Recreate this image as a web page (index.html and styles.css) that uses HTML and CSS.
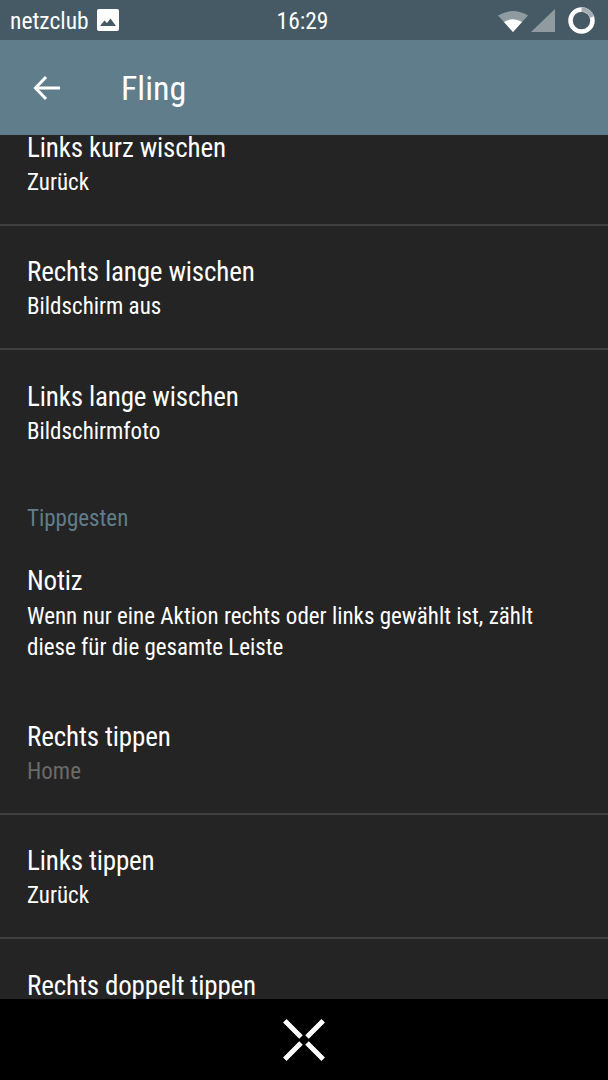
FILE: index.html
```html
<!DOCTYPE html>
<html lang="de">
<head>
    <meta charset="UTF-8">
    <meta name="viewport" content="width=device-width, initial-scale=1.0">
    <title>Fling</title>
    <link rel="stylesheet" href="styles.css">
</head>
<body>
    <div class="status-bar">
        <div class="status-left">
            <span class="status-text">netzclub</span>
            <svg class="picture-icon" width="22" height="22" viewBox="0 0 22 22">
                <rect x="0" y="0" width="22" height="22" rx="2" fill="#fff"/>
                <path d="M3 17 L7.500 11.500 L10 14 L13.500 9.500 L19 17 Z" fill="#455a64"/>
            </svg>
        </div>
        <div class="status-text">16:29</div>
        <div class="status-right">
            <svg width="30" height="23" viewBox="0 0 30 23">
                <path d="M0 6.500 Q15 -2.500 30 6.500 L15 23 Z" fill="#8f9ba1"/>
                <path d="M6 13 Q15 7.500 24 13 L15 23 Z" fill="#fff"/>
            </svg>
            <svg width="24" height="23" viewBox="0 0 24 23">
                <path d="M0 23 L24 0 L24 23 Z" fill="#8f9ba1"/>
            </svg>
            <svg class="battery" width="27" height="27" viewBox="0 0 27 27">
                <circle cx="13.500" cy="13.500" r="11" fill="none" stroke="#fff" stroke-width="4.500"/>
                <path d="M13.500 2.500 A11 11 0 0 1 24 10" fill="none" stroke="#a3adb2" stroke-width="4.500"/>
            </svg>
        </div>
    </div>

    <header class="app-bar">
        <svg class="back-icon" width="28" height="26" viewBox="0 0 28 26">
            <path d="M27 13 H3 M13 2 L2.500 13 L13 24" fill="none" stroke="#fff" stroke-width="3"/>
        </svg>
        <h1>Fling</h1>
    </header>

    <main class="list">
        <div class="row row-first">
            <div class="row-title">Links kurz wischen</div>
            <div class="row-sub">Zurück</div>
        </div>
        <div class="row">
            <div class="row-title">Rechts lange wischen</div>
            <div class="row-sub">Bildschirm aus</div>
        </div>
        <div class="row row-plain row-last-swipe">
            <div class="row-title">Links lange wischen</div>
            <div class="row-sub">Bildschirmfoto</div>
        </div>
        <div class="section-title">Tippgesten</div>
        <div class="row row-plain row-note">
            <div class="row-title">Notiz</div>
            <div class="row-sub">Wenn nur eine Aktion rechts oder links gewählt ist, zählt diese für die gesamte Leiste</div>
        </div>
        <div class="row">
            <div class="row-title">Rechts tippen</div>
            <div class="row-sub row-disabled">Home</div>
        </div>
        <div class="row">
            <div class="row-title">Links tippen</div>
            <div class="row-sub">Zurück</div>
        </div>
        <div class="row row-plain">
            <div class="row-title">Rechts doppelt tippen</div>
        </div>
    </main>

    <footer class="nav-bar">
        <svg width="44" height="44" viewBox="0 0 44 44">
            <path d="M2.800 2.800 L19 19 M41.200 2.800 L25 19 M2.800 41.200 L19 25 M41.200 41.200 L25 25" fill="none" stroke="#fff" stroke-width="5"/>
        </svg>
    </footer>
</body>
</html>
```

FILE: styles.css
```css
html, body {
    height: 100%;
}
body {
    font-family: Roboto, "Liberation Sans", sans-serif;
    font-stretch: 75%;
    background-color: #000;
    color: #fff;
    margin: 0;
    display: flex;
    flex-direction: column;
    height: 1080px;
    overflow: hidden;
}
.status-bar {
    height: 40px;
    flex: none;
    background-color: #455a64;
    display: grid;
    grid-template-columns: 1fr auto 1fr;
    align-items: center;
    padding: 0 13px 0 10px;
    font-size: 23.500px;
}
.status-left {
    display: flex;
    align-items: center;
    gap: 8px;
}
.status-text {
    padding-top: 2px;
}
.status-right {
    display: flex;
    justify-content: flex-end;
    align-items: center;
    gap: 3px;
}
.battery {
    margin-left: 10px;
}
.app-bar {
    height: 95px;
    flex: none;
    background-color: #607d8b;
    display: flex;
    align-items: center;
    padding-left: 33px;
    box-sizing: border-box;
}
.app-bar h1 {
    margin: 0 0 0 60px;
    font-size: 34px;
    font-weight: 400;
}
.list {
    flex: 1;
    min-height: 0;
    overflow: hidden;
    background-color: #242424;
}
.row {
    padding: 31px 27px 0;
    height: 124px;
    box-sizing: border-box;
    border-bottom: 2px solid #3f3f3f;
}
.row-first {
    height: 91px;
    padding-top: 0;
}
.row-first .row-title {
    line-height: 26px;
}
.row-first .row-sub {
    margin-top: 6px;
}
.row-plain {
    border-bottom: none;
    padding-top: 32px;
}
.row-last-swipe {
    height: 155px;
}
.row-note {
    height: 157px;
}
.row-note .row-sub {
    margin-top: 5px;
}
.row-title {
    font-size: 27px;
    letter-spacing: -0.150px;
    line-height: 30px;
}
.row-sub {
    font-size: 23px;
    line-height: 31px;
    margin-top: 4px;
}
.row-disabled {
    color: #6a6a6a;
}
.section-title {
    padding: 0 27px;
    margin-bottom: 1px;
    font-size: 23px;
    line-height: 28px;
    color: #607d8b;
}
.nav-bar {
    height: 81px;
    flex: none;
    background-color: #000;
    display: flex;
    justify-content: center;
    align-items: center;
}
```
